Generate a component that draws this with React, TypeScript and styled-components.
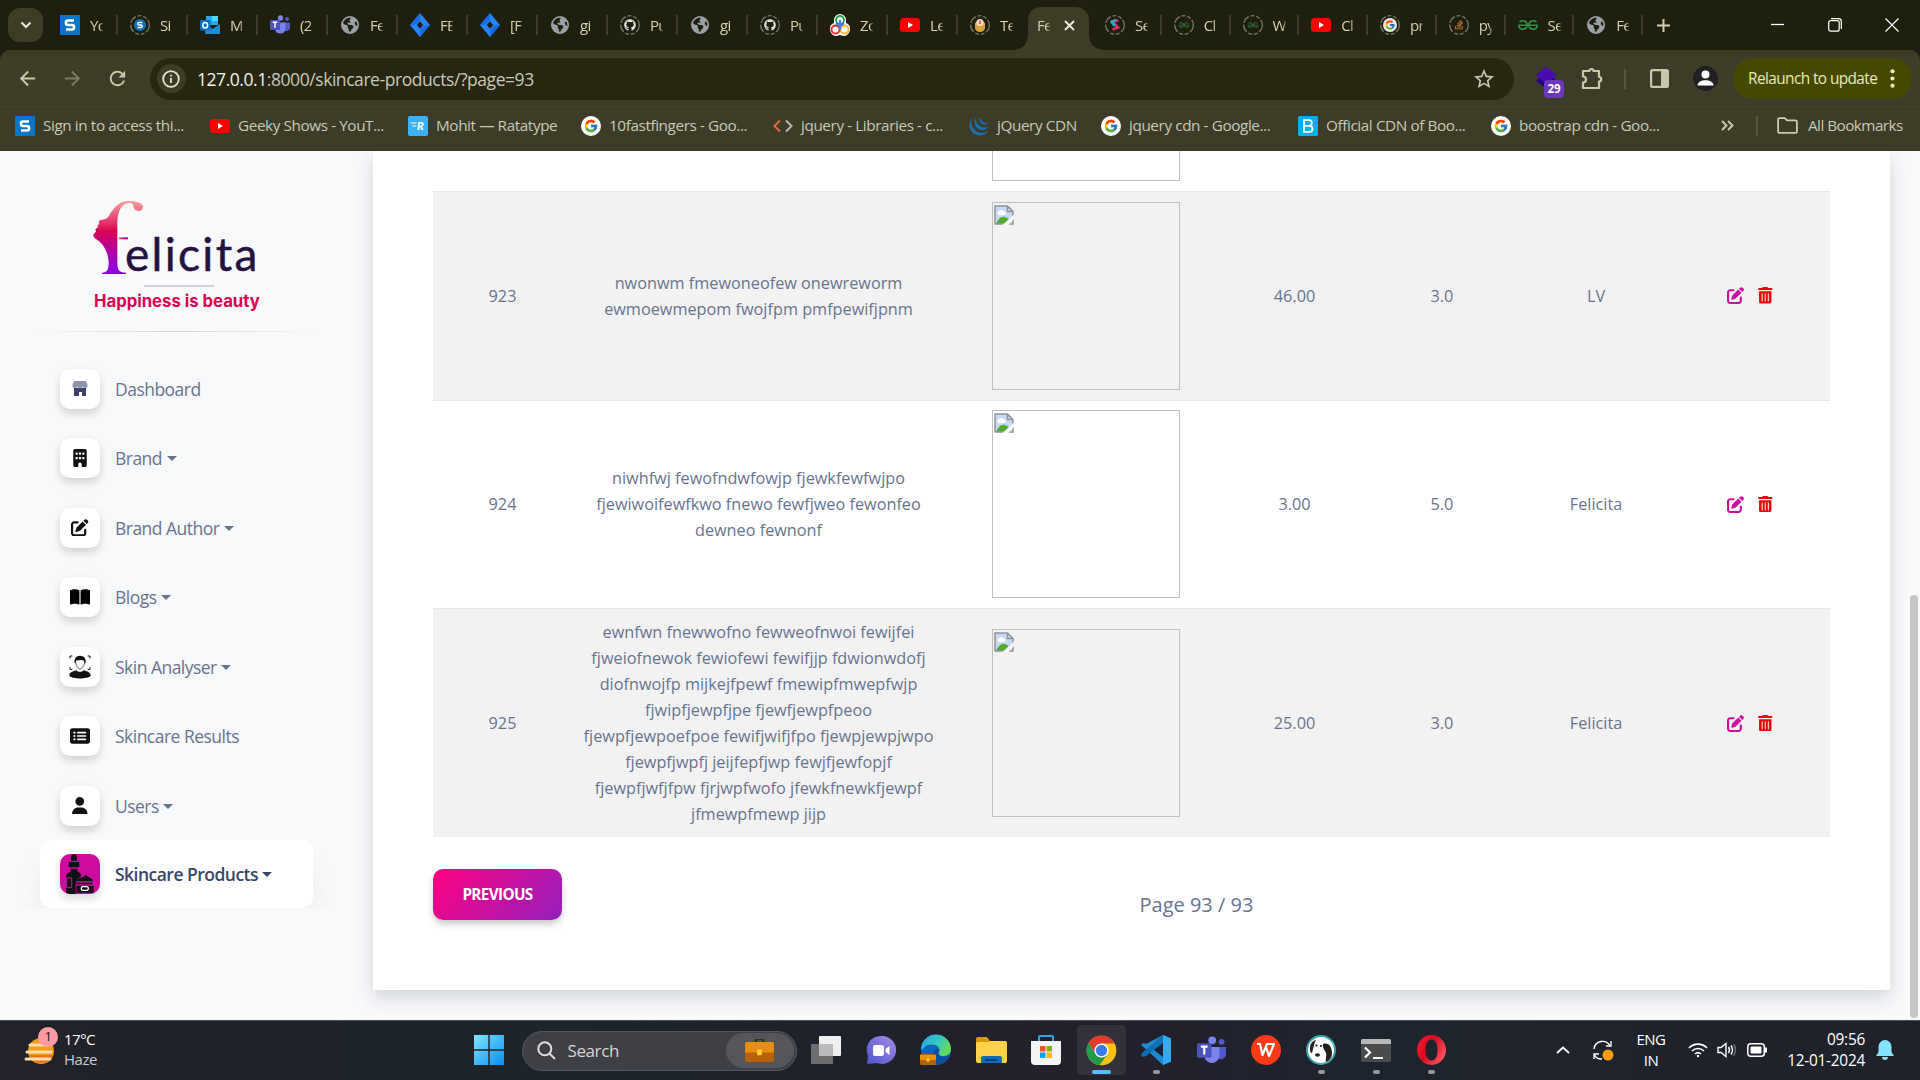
import React from "react";
import styled, { createGlobalStyle, css } from "styled-components";
import {
  FaBuilding,
  FaPenToSquare,
  FaRectangleList,
  FaUser,
  FaTrashCan,
  FaBookOpen,
  FaEarthAmericas,
  FaGithub,
  FaStackOverflow,
} from "react-icons/fa6";
import { SiGeeksforgeeks } from "react-icons/si";
import { FcGoogle } from "react-icons/fc";
import { MdArrowBack, MdArrowForward, MdRefresh, MdStarBorder } from "react-icons/md";

const GlobalStyle = createGlobalStyle`
  * { box-sizing: border-box; }
  html, body { margin: 0; padding: 0; overflow: hidden; }
  body { font-family: "Open Sans", "Noto Sans", sans-serif; }
  svg { display: block; flex: none; }
`;

const Screen = styled.div`
  width: 1920px;
  height: 1080px;
  display: flex;
  flex-direction: column;
  overflow: hidden;
  background: #f8f9fb;
`;

/* ---------- Browser chrome ---------- */

const TabStrip = styled.div`
  height: 50px;
  flex: none;
  background: #1f1f0d;
  display: flex;
  padding-left: 8px;
`;

const TabSearch = styled.div`
  width: 35px;
  height: 34px;
  margin: 8px 5px 0 0;
  border-radius: 12px;
  background: #3c3c28;
  display: flex;
  align-items: center;
  justify-content: center;
`;

const Tab = styled.div<{ $w: number; $sep?: boolean }>`
  width: ${(p) => p.$w}px;
  height: 50px;
  flex: none;
  padding-left: 12px;
  display: flex;
  align-items: center;
  gap: 10px;
  ${(p) =>
    p.$sep &&
    css`
      background: linear-gradient(#3c3c28, #3c3c28) no-repeat right 15px / 2px 20px;
      background-position: right 0 top 15px;
    `}
`;

const TabTitle = styled.span`
  width: 13px;
  overflow: hidden;
  white-space: nowrap;
  font-size: 15px;
  line-height: 20px;
  letter-spacing: -0.7px;
  color: #d2d3b0;
  mask-image: linear-gradient(90deg, #000 75%, rgba(0, 0, 0, 0.25));
`;

const ActiveTab = styled.div`
  position: relative;
  width: 61px;
  height: 43px;
  margin: 7px 4px 0 0;
  flex: none;
  border-radius: 13px 13px 0 0;
  background: #3c3c28;
  display: flex;
  align-items: center;
  padding: 0 0 7px 9px;
  gap: 14px;
  &::before,
  &::after {
    content: "";
    position: absolute;
    bottom: 0;
    width: 14px;
    height: 14px;
  }
  &::before {
    left: -14px;
    background: radial-gradient(circle at 0 0, transparent 13.5px, #3c3c28 14px);
  }
  &::after {
    right: -14px;
    background: radial-gradient(circle at 100% 0, transparent 13.5px, #3c3c28 14px);
  }
`;

const NewTab = styled.div`
  width: 40px;
  height: 50px;
  display: flex;
  align-items: center;
  justify-content: center;
`;

const WindowButtons = styled.div`
  margin-left: auto;
  display: flex;
  height: 49px;
`;

const WindowButton = styled.div`
  width: 57px;
  display: flex;
  align-items: center;
  justify-content: center;
`;

const ChromeFrame = styled.div`
  background: #1f1f0d;
  flex: none;
`;

const Toolbar = styled.div`
  height: 57px;
  background: #3c3c28;
  border-radius: 10px 10px 0 0;
  border-bottom: 1px solid #42422f;
  display: flex;
  align-items: center;
  padding: 1px 8px 0 15px;
`;

const NavIcon = styled.div<{ $dim?: boolean }>`
  width: 26px;
  margin-right: 19px;
  display: flex;
  justify-content: center;
  color: ${(p) => (p.$dim ? "#7c7c66" : "#c8c9a8")};
`;

const Omnibox = styled.div`
  width: 1365px;
  height: 42px;
  border-radius: 21px;
  background: #262613;
  display: flex;
  align-items: center;
  padding: 0 18px 0 7px;
`;

const InfoBadge = styled.div`
  width: 29px;
  height: 29px;
  border-radius: 50%;
  background: #3c3c28;
  display: flex;
  align-items: center;
  justify-content: center;
  margin-right: 11px;
`;

const Url = styled.div`
  flex: 1;
  font-size: 17.5px;
  line-height: 24px;
  letter-spacing: -0.44px;
  color: #c8c9b4;
  b {
    font-weight: 400;
    color: #f2f3e0;
  }
`;

const ExtensionSlot = styled.div`
  position: relative;
  width: 30px;
  height: 42px;
  margin-left: 22px;
  display: flex;
  align-items: center;
`;

const ExtensionBadge = styled.span`
  position: absolute;
  left: 8px;
  top: 22px;
  width: 20px;
  height: 18px;
  border-radius: 4px;
  background: #6a37bd;
  color: #fff;
  font-size: 11.5px;
  font-weight: 700;
  line-height: 18px;
  text-align: center;
`;

const Puzzle = styled.div`
  margin-left: 15px;
`;

const Divider = styled.div<{ $l: number; $r: number }>`
  width: 2px;
  height: 20px;
  background: #55563d;
  margin: 0 ${(p) => p.$r}px 0 ${(p) => p.$l}px;
`;

const Profile = styled.div`
  width: 25px;
  height: 25px;
  margin: 0 15px 0 24px;
  border-radius: 50%;
  background: #202124;
  overflow: hidden;
`;

const Relaunch = styled.div`
  width: 179px;
  height: 41px;
  border-radius: 20px;
  background: #454900;
  color: #e7e9b8;
  font-size: 15.4px;
  letter-spacing: -0.6px;
  display: flex;
  align-items: center;
  justify-content: space-between;
  padding: 0 17px 1px 15px;
  white-space: nowrap;
`;

const Bookmarks = styled.div`
  height: 44px;
  background: #3c3c28;
  display: flex;
  align-items: center;
  padding: 0 18px 7px 15px;
`;

const Bookmark = styled.div<{ $w: number }>`
  width: ${(p) => p.$w}px;
  flex: none;
  display: flex;
  align-items: center;
  gap: 8px;
  font-size: 15.3px;
  line-height: 20px;
  letter-spacing: -0.41px;
  color: #c9cab4;
  white-space: nowrap;
`;

const BookmarkLabel = styled.span`
  padding-bottom: 2px;
`;

const AllBookmarks = styled(Bookmark)`
  gap: 10px;
  letter-spacing: -0.55px;
`;

const BookmarkMore = styled.div`
  margin-left: 65px;
`;

/* ---------- Page ---------- */

const Page = styled.div`
  height: 869px;
  flex: none;
  display: flex;
  background: #f8f9fb;
  overflow: hidden;
`;

const Sidebar = styled.aside`
  width: 313px;
  margin: 0 40px 0 20px;
  height: 757px;
  overflow: hidden;
  flex: none;
`;

const Brand = styled.div`
  height: 180px;
  padding: 44px 0 0 68px;
`;

const BrandWord = styled.div`
  display: flex;
  height: 85px;
`;

const BrandText = styled.span`
  font-family: Lato, sans-serif;
  font-size: 46px;
  line-height: 46px;
  letter-spacing: 2.3px;
  color: #24123f;
  margin: 36px 0 0 -23px;
  -webkit-text-stroke: 0.5px #24123f;
`;

const BrandRule = styled.div`
  width: 70px;
  height: 2px;
  background: #d0d1d4;
  margin: 5px 0 0 56px;
`;

const Tagline = styled.div`
  font-family: Inter, sans-serif;
  font-weight: 700;
  font-size: 16.7px;
  line-height: 22px;
  color: #d9014f;
  margin: 3px 0 0 6px;
  white-space: nowrap;
`;

const SideRule = styled.div`
  height: 1px;
  background: linear-gradient(90deg, transparent 4%, rgba(0, 0, 0, 0.15), transparent 96%);
`;

const Menu = styled.nav`
  margin-top: 21.8px;
`;

const MenuItem = styled.div<{ $active?: boolean }>`
  height: ${(p) => (p.$active ? 68 : 69.5)}px;
  width: 273px;
  margin-left: 20px;
  padding-left: 20px;
  display: flex;
  align-items: center;
  gap: 15px;
  font-size: 17.5px;
  letter-spacing: -0.52px;
  color: #67748e;
  white-space: nowrap;
  ${(p) =>
    p.$active &&
    css`
      background: #fff;
      border-radius: 10px;
      box-shadow: 0 20px 27px rgba(0, 0, 0, 0.05);
      color: #344767;
      font-weight: 600;
    `}
`;

const IconTile = styled.div<{ $active?: boolean }>`
  width: 40px;
  height: 40px;
  border-radius: 10px;
  background: ${(p) => (p.$active ? "#cb0c9f" : "#fff")};
  box-shadow: 0 5px 8px rgba(20, 20, 20, 0.12), 0 3px 12px rgba(20, 20, 20, 0.05);
  display: flex;
  align-items: center;
  justify-content: center;
  color: #111;
  overflow: hidden;
`;

const Caret = styled.i`
  display: inline-block;
  margin-left: 4.5px;
  vertical-align: 4px;
  border: 5px solid transparent;
  border-top-color: currentColor;
  border-bottom: 0;
`;

const Card = styled.main`
  width: 1517px;
  height: 839px;
  flex: none;
  background: #fff;
  box-shadow: 0 8px 18px rgba(20, 30, 40, 0.16);
  padding: 0 60px;
`;

const ScrollRail = styled.div`
  margin-left: auto;
  width: 10px;
  padding-top: 444px;
`;

const ScrollThumb = styled.div`
  width: 8px;
  height: 423px;
  border-radius: 4px;
  background: #c4c5c6;
`;

const Row = styled.div<{ $h: number; $odd?: boolean }>`
  display: grid;
  grid-template-columns: 139px 373px 282px 135px 160px 148px 160px;
  height: ${(p) => p.$h}px;
  align-items: center;
  text-align: center;
  border-top: 1px solid #e7e8e9;
  background: ${(p) => (p.$odd ? "#f2f2f2" : "#fff")};
  font-size: 16.25px;
  line-height: 26px;
  color: #67748e;
`;

const NameCell = styled.div`
  white-space: pre-line;
`;

const Picture = styled.div`
  width: 188px;
  height: 188px;
  margin: 0 auto;
  border: 1px solid #c0c0c0;
  padding: 2px 0 0 1px;
`;

const HiddenRow = styled.div`
  height: 40px;
  display: flex;
  justify-content: flex-start;
  padding-left: 559px;
`;

const PictureTail = styled.div`
  width: 188px;
  height: 30px;
  border: 1px solid #c0c0c0;
  border-top: 0;
`;

const Actions = styled.div`
  display: flex;
  justify-content: center;
  gap: 13.5px;
  .edit {
    color: #cb0c9f;
  }
  .trash {
    color: #ee0404;
  }
`;

const Pager = styled.div`
  display: flex;
  margin-top: 32px;
`;

const Previous = styled.button`
  width: 129px;
  height: 51px;
  border: 0;
  border-radius: 10px;
  padding: 0 0 2px;
  background: linear-gradient(310deg, #9420bb, #ff0080);
  box-shadow: 0 5px 9px -1px rgba(0, 0, 0, 0.16), 0 3px 6px -1px rgba(0, 0, 0, 0.1);
  color: #fff;
  font-family: inherit;
  font-weight: 700;
  font-size: 15.3px;
  letter-spacing: -0.65px;
`;

const PageCount = styled.div`
  margin: 20px 0 0 577.5px;
  font-size: 20px;
  line-height: 32px;
  color: #67748e;
`;

/* ---------- Taskbar ---------- */

const Taskbar = styled.footer`
  height: 60px;
  flex: none;
  border-top: 1px solid #4a5057;
  background: linear-gradient(90deg, #22222a 0%, #1c242c 28%, #20212a 48%, #23202c 58%, #1e242d 70%, #20222b 100%);
  color: #fff;
  display: flex;
  align-items: center;
  font-size: 15px;
`;

const Weather = styled.div`
  width: 461.5px;
  display: flex;
  align-items: center;
  padding: 0 0 3px 24px;
  gap: 6px;
  line-height: 20px;
  letter-spacing: -0.5px;
`;

const Condition = styled.span`
  color: #c9cbce;
`;

const WeatherIcon = styled.div`
  position: relative;
  width: 34px;
  height: 42px;
  padding-top: 9px;
`;

const WeatherBadge = styled.span`
  position: absolute;
  right: 0;
  top: -1px;
  width: 20px;
  height: 20px;
  border-radius: 50%;
  background: #ff99a4;
  color: #2a1215;
  text-align: center;
  font-size: 13px;
  line-height: 19px;
`;

const Slot = styled.div<{ $on?: boolean; $dot?: boolean }>`
  width: 55px;
  height: 59px;
  display: flex;
  flex-direction: column;
  align-items: center;
  padding-top: 4px;
  &::after {
    content: "";
    width: ${(p) => (p.$on ? 19 : 7)}px;
    height: 4px;
    margin-top: -5px;
    border-radius: 2px;
    background: ${(p) => (p.$on ? "#4cc2ff" : p.$dot ? "#95979b" : "transparent")};
  }
`;

const SlotFace = styled.div<{ $on?: boolean }>`
  width: 49px;
  height: 50px;
  border-radius: 5px;
  background: ${(p) => (p.$on ? "rgba(255,255,255,.08)" : "none")};
  display: flex;
  align-items: center;
  justify-content: center;
`;

const SearchPill = styled.div`
  width: 275px;
  height: 40px;
  margin: 0 2px 0 5px;
  border-radius: 20px;
  border: 1px solid #54565c;
  background: #3f4045;
  display: flex;
  align-items: center;
  padding: 0 2px 0 14px;
  gap: 12px;
  font-size: 17px;
  letter-spacing: -0.4px;
  color: #d4d5d7;
`;

const SearchArt = styled.div`
  margin-left: auto;
  width: 68px;
  height: 35px;
  border-radius: 18px;
  background: #55565b;
  display: flex;
  align-items: center;
  justify-content: center;
`;

const Tray = styled.div`
  margin-left: auto;
  display: flex;
  align-items: center;
  padding: 0 26px 1px 0;
`;

const TrayItem = styled.div<{ $l: number }>`
  margin-left: ${(p) => p.$l}px;
`;

const TrayText = styled.div<{ $w: number; $l: number; $end?: boolean }>`
  width: ${(p) => p.$w}px;
  margin-left: ${(p) => p.$l}px;
  text-align: ${(p) => (p.$end ? "right" : "center")};
  font-size: ${(p) => (p.$end ? 15.4 : 15)}px;
  line-height: 21px;
  letter-spacing: ${(p) => (p.$end ? -0.25 : -0.5)}px;
  white-space: nowrap;
`;

/* ---------- Small drawings ---------- */

const Ring = ({ children }: { children: React.ReactNode }) => (
  <svg width="20" height="24" viewBox="0 0 20 24">
    <circle cx="10" cy="12" r="9.3" fill="none" stroke="#77786a" strokeWidth="1.3" strokeDasharray="8 1.8 4 1.8 4 1.8 8 1.8" />
    {children}
  </svg>
);
const SBox = () => (
  <svg width="20" height="20" viewBox="0 0 20 20">
    <rect width="20" height="20" fill="#0277c9" />
    <path d="M14 5.5H8a2 2 0 0 0-2 2v.5a2 2 0 0 0 2 2h4a2 2 0 0 1 2 2v.5a2 2 0 0 1-2 2H6" fill="none" stroke="#fff" strokeWidth="2.6" />
  </svg>
);
const YouTube = () => (
  <svg width="20" height="20" viewBox="0 0 20 20">
    <rect y="3" width="20" height="14" rx="3.5" fill="#f00" />
    <path d="M8 7v6l5-3z" fill="#fff" />
  </svg>
);
const Outlook = () => (
  <svg width="20" height="20" viewBox="0 0 20 20">
    <path d="M6 1h12v9H6z" fill="#28a8ea" />
    <path d="M12 1h6v5h-6z" fill="#50d9ff" />
    <path d="M5 9l7.5 5L20 9v9a1 1 0 0 1-1 1H6a1 1 0 0 1-1-1z" fill="#1490df" />
    <rect y="5" width="10.5" height="10.5" rx="1" fill="#0f6cbd" />
    <ellipse cx="5.2" cy="10.2" rx="2.4" ry="2.8" fill="none" stroke="#fff" strokeWidth="1.5" />
  </svg>
);
const Teams = ({ s = 20 }: { s?: number }) => (
  <svg width={s} height={s} viewBox="0 0 20 20">
    <circle cx="10.5" cy="3" r="2.7" fill="#7b83eb" />
    <circle cx="17" cy="4" r="2" fill="#5059c9" />
    <path d="M13 7.5h7V13a3.5 3.5 0 0 1-6 2z" fill="#5059c9" />
    <path d="M5 7.5h10.5V14A5.3 5.3 0 0 1 5 14z" fill="#7b83eb" />
    <rect y="5" width="10" height="10" rx="1" fill="#4b53bc" />
    <path d="M2.7 7.3h4.6M5 7.3v5.5" stroke="#fff" strokeWidth="1.5" />
  </svg>
);
const Jira = () => (
  <svg width="20" height="24" viewBox="0 0 20 24">
    <path d="M10 0l10 12-10 12L0 12z" fill="#2684ff" />
    <path d="M10 0v7l-5 5-5 0zM10 24v-7l5-5h5z" fill="#1260dc" opacity=".65" />
    <path d="M10 8.2l3.2 3.8-3.2 3.8L6.8 12z" fill="#20210f" />
  </svg>
);
const GlobeBox = styled.span`
  padding: 0 1px;
`;
const Globe = () => (
  <GlobeBox>
    <FaEarthAmericas size={18} color="#9aa0a6" />
  </GlobeBox>
);
const GitHubTab = () => (
  <Ring>
    <FaGithub x="4" y="6" size={12} color="#dfdfe0" />
  </Ring>
);
const Zoho = () => (
  <svg width="20" height="24" viewBox="0 0 20 22">
    <path d="M10 0a6 6 0 0 1 6 6v3a6 6 0 0 1 4 6c0 4-3 7-6 7-2 0-3-1-4-1s-2 1-4 1c-3 0-6-3-6-7a6 6 0 0 1 4-6V6a6 6 0 0 1 6-6z" fill="#fff" />
    <circle cx="10" cy="6" r="4" fill="none" stroke="#1a9f4b" strokeWidth="1.8" />
    <circle cx="5.5" cy="15.5" r="4" fill="none" stroke="#e42527" strokeWidth="1.8" />
    <circle cx="14.5" cy="15.5" r="4" fill="none" stroke="#f9b21d" strokeWidth="1.8" />
    <path d="M10 6v10M6 9l4 3 4-3" stroke="#3f7ed8" strokeWidth="2.2" fill="none" />
  </svg>
);
const GBadge = () => (
  <svg width="20" height="20" viewBox="0 0 20 20">
    <circle cx="10" cy="10" r="10" fill="#fff" />
    <FcGoogle x="2.5" y="2.5" size={15} />
  </svg>
);

const tabsLeft: [React.ReactNode, string][] = [
  [<SBox />, "Yo"],
  [<Ring><circle cx="10" cy="12" r="6" fill="#1374b8" /><path d="M12.3 9.5H9a1.2 1.2 0 0 0 0 2.5h2a1.2 1.2 0 0 1 0 2.5H7.7" fill="none" stroke="#fff" strokeWidth="1.3" /></Ring>, "Si"],
  [<Outlook />, "M"],
  [<Teams />, "(2"],
  [<Globe />, "Fe"],
  [<Jira />, "FE"],
  [<Jira />, "[F"],
  [<Globe />, "gi"],
  [<GitHubTab />, "Pu"],
  [<Globe />, "gi"],
  [<GitHubTab />, "Pu"],
  [<Zoho />, "Zo"],
  [<YouTube />, "Le"],
  [<Ring><path d="M5 10l5-4 5 4v5a5 4 0 0 1-10 0z" fill="#d8a53c" /><circle cx="10" cy="9.5" r="3.6" fill="#f3d9c8" /><path d="M10 7.5v3.4" stroke="#d33" strokeWidth="1.4" /></Ring>, "Te"],
];
const tabsRight: [React.ReactNode, string][] = [
  [<Ring><path d="M13.5 7.5l-6 1 5.5 6-5.5 2" fill="none" stroke="#d8326f" strokeWidth="2.6" /><path d="M11 6.5L6.6 9l3 4" fill="none" stroke="#18b5cf" strokeWidth="2.4" /></Ring>, "Se"],
  [<Ring><SiGeeksforgeeks x="4.5" y="6.5" size={11} color="#2c6e3b" /></Ring>, "Cl"],
  [<Ring><SiGeeksforgeeks x="4.5" y="6.5" size={11} color="#2c6e3b" /></Ring>, "W"],
  [<YouTube />, "Cl"],
  [<Ring><circle cx="10" cy="12" r="7" fill="#e9e9e9" /><FcGoogle x="4.5" y="6.5" size={11} /></Ring>, "pr"],
  [<Ring><FaStackOverflow x="4.5" y="6" size={11} color="#d9772b" /></Ring>, "py"],
  [<SiGeeksforgeeks size={20} color="#2f8d46" />, "Se"],
  [<Globe />, "Fe"],
];

const bookmarks: [React.ReactNode, string, number][] = [
  [<SBox />, "Sign in to access thi...", 195],
  [<YouTube />, "Geeky Shows - YouT...", 198],
  [
    <svg width="20" height="20" viewBox="0 0 20 20">
      <rect width="20" height="20" rx="2" fill="#3bb0fb" />
      <path d="M2.5 7h6M4.5 10h4" stroke="#fff" strokeWidth="1.2" />
      <text x="9" y="14" fontFamily="Lato" fontStyle="italic" fontWeight="900" fontSize="11" fill="#fff">R</text>
    </svg>,
    "Mohit — Ratatype",
    173,
  ],
  [<GBadge />, "10fastfingers - Goo...", 192],
  [
    <svg width="20" height="20" viewBox="0 0 20 20">
      <path d="M7 4.5L1.5 10 7 15.5" fill="none" stroke="#e8643a" strokeWidth="2" />
      <path d="M13 4.5l5.5 5.5-5.5 5.5" fill="none" stroke="#b9b9b0" strokeWidth="2" />
    </svg>,
    "jquery - Libraries - c...",
    196,
  ],
  [
    <svg width="20" height="20" viewBox="0 0 20 20" fill="#1c6fb0">
      <path d="M2.5 2.5C-2 9 1 19.5 11 19.5c4 0 7-2 8.5-5-3 2.5-7 3-10.5 1.5C3.5 13.5 1.5 8 2.5 2.5z" />
      <path d="M6.5 1.5C4 7 7 14 13 14c3 0 5-1.5 6.5-3.5-3 1.5-5.5 1.5-8 0C8 8.5 6.3 5 6.5 1.5z" />
      <path d="M11 .5C9.5 4.5 11.5 8.5 15.5 8.5c1.8 0 3-.8 4-2-1.8.7-3.5.7-5-.2C12.3 5 11.2 2.8 11 .5z" />
    </svg>,
    "jQuery CDN",
    132,
  ],
  [<GBadge />, "jquery cdn - Google...", 197],
  [
    <svg width="20" height="20" viewBox="0 0 20 20">
      <rect width="20" height="20" rx="1.5" fill="#06aeef" />
      <path d="M6 4.2h5a2.8 2.8 0 0 1 0 5.6H6zm0 5.6h5.5a3 3 0 0 1 0 6H6z" fill="none" stroke="#fff" strokeWidth="1.8" />
    </svg>,
    "Official CDN of Boo...",
    193,
  ],
  [<GBadge />, "boostrap cdn - Goo...", 165],
];

const Dashboard = () => (
  <svg width="16" height="16" viewBox="0 0 16 16">
    <path d="M2 7h12v8h-4v-4H7v4H2z" fill="#3a416f" />
    <path d="M2 0h12l1.5 4a2.5 2.5 0 0 1-5 1 2.5 2.5 0 0 1-5 0 2.5 2.5 0 0 1-5-1z" fill="#9193b3" />
  </svg>
);
const FaceScan = () => (
  <svg width="22" height="24" viewBox="0 0 66 72">
    <path d="M3 10V3h7M56 3h7v7M3 37v6h7M56 43h7v-6" fill="none" stroke="#111" strokeWidth="3" />
    <path d="M20 16C22 3 44 3 47 16c1 14-4 20-14 27C24 37 19 30 20 16z" fill="#fff" stroke="#111" strokeWidth="2" />
    <path d="M18 26C13 10 22 2 33 2s21 8 16 24l-4-9c-8-4-17 0-23-1z" fill="#111" />
    <path d="M1 62C1 50 12 50 22 46c5 6 17 6 22 0 12 4 21 5 21 16-10 11-54 11-64 0z" fill="#111" />
  </svg>
);
const SkincareArt = () => (
  <svg width="40" height="40" viewBox="0 0 120 120">
    <g fill="#111">
      <path d="M33 20V8c0-10 18-10 18 0v12z" />
      <rect x="26" y="24" width="32" height="16" rx="3" />
      <path d="M32 44h20v8c8 5 12 8 12 16v52H18V68c0-8 8-10 14-16z" />
    </g>
    <path d="M47 120V90c2-16 16-24 30-30 12 6 24 14 26 30v30z" fill="#cb0c9f" />
    <path d="M50 82c2-8 12-10 19-12l9-8 8 8c8 3 14 6 12 12zM50 86h48v5H50zM49 95h52v21H49z" fill="#111" />
    <rect x="20" y="72" width="15" height="28" fill="none" stroke="#cb0c9f" strokeWidth="3" />
    <rect x="64" y="98" width="21" height="11" rx="5" fill="none" stroke="#fff" strokeWidth="4" />
  </svg>
);

const menu: [React.ReactNode, string, boolean][] = [
  [<Dashboard />, "Dashboard", false],
  [<FaBuilding size={18} />, "Brand", true],
  [<FaPenToSquare size={17.5} />, "Brand Author", true],
  [<FaBookOpen size={20} color="#000" />, "Blogs", true],
  [<FaceScan />, "Skin Analyser", true],
  [<FaRectangleList size={20} />, "Skincare Results", false],
  [<FaUser size={17.5} />, "Users", true],
];

const BrokenImage = () => (
  <svg width="20" height="20" viewBox="0 0 20 20">
    <path d="M1 1h12.5L19 6.5V19H1z" fill="#c6d9f7" />
    <path d="M4 10a2.5 2.5 0 0 1 1-4 2.5 2.5 0 0 1 4 0 2 2 0 0 1 1 4z" fill="#fff" />
    <path d="M2 19c2-5 5-8 9-7l4 2-4 5z" fill="#54ab36" />
    <path d="M1 19.5V1h12.5L19 6.5V19H1M13.5 1v5.5H19" fill="none" stroke="#8f9499" strokeWidth="1.5" />
    <path d="M8.5 20L20 9.5V14l-5.5 6z" fill="#f8f8f8" />
  </svg>
);

type Product = { id: string; name: string; price: string; rating: string; brand: string; h: number };
const products: Product[] = [
  { id: "923", name: "nwonwm fmewoneofew onewreworm\newmoewmepom fwojfpm pmfpewifjpnm", price: "46.00", rating: "3.0", brand: "LV", h: 208.5 },
  { id: "924", name: "niwhfwj fewofndwfowjp fjewkfewfwjpo\nfjewiwoifewfkwo fnewo fewfjweo fewonfeo\ndewneo fewnonf", price: "3.00", rating: "5.0", brand: "Felicita", h: 208.5 },
  {
    id: "925",
    name: "ewnfwn fnewwofno fewweofnwoi fewijfei\nfjweiofnewok fewiofewi fewifjjp fdwionwdofj\ndiofnwojfp mijkejfpewf fmewipfmwepfwjp\nfjwipfjewpfjpe fjewfjewpfpeoo\nfjewpfjewpoefpoe fewifjwifjfpo fjewpjewpjwpo\nfjewpfjwpfj jeijfepfjwp fewjfjewfopjf\nfjewpfjwfjfpw fjrjwpfwofo jfewkfnewkfjewpf\njfmewpfmewp jijp",
    price: "25.00",
    rating: "3.0",
    brand: "Felicita",
    h: 229,
  },
];

const Briefcase = ({ w, h }: { w: number; h: number }) => (
  <svg width={w} height={h} viewBox="0 0 30 24">
    <path d="M11 4V2q0-2 2-2h4q2 0 2 2v2" fill="none" stroke="#3c2c20" strokeWidth="2.5" />
    <rect y="3" width="30" height="21" rx="2" fill="#b8620e" />
    <path d="M0 5q0-2 2-2h26q2 0 2 2v9H0z" fill="#e98d0d" />
    <rect x="12.5" y="11" width="5" height="6" rx="1" fill="#ffd02e" />
  </svg>
);

const apps: { icon: React.ReactNode; on?: boolean; dot?: boolean }[] = [
  {
    icon: (
      <svg width="30" height="28" viewBox="0 0 30 28">
        <rect x="8" width="22" height="20" rx="1" fill="#efeff0" />
        <rect y="8" width="22" height="20" rx="1" fill="#6d6e70" />
        <rect x="8" y="8" width="14" height="12" fill="#b9babb" />
      </svg>
    ),
  },
  {
    icon: (
      <svg width="30" height="29" viewBox="0 0 30 29">
        <defs>
          <linearGradient id="chat" x1="1" y1="0" x2="0" y2="1">
            <stop stopColor="#a78be6" />
            <stop offset="1" stopColor="#4b55cf" />
          </linearGradient>
        </defs>
        <path d="M15 0a14 14 0 1 1-4 27l-10 1 1-8A14 14 0 0 1 15 0z" fill="url(#chat)" />
        <rect x="7" y="9" width="11" height="11" rx="2" fill="#fff" />
        <path d="M19.5 13l4-3v9l-4-3z" fill="#fff" />
      </svg>
    ),
  },
  {
    icon: (
      <svg width="32" height="32" viewBox="0 0 32 32">
        <defs>
          <linearGradient id="edge" x1="0" y1="0" x2="1" y2=".4">
            <stop stopColor="#2aa5e8" />
            <stop offset=".6" stopColor="#35c7c3" />
            <stop offset="1" stopColor="#61dd5b" />
          </linearGradient>
        </defs>
        <circle cx="16" cy="16" r="15" fill="#1263b3" />
        <path d="M1 16A15 15 0 0 1 31 15c0 5-4 7-8 7-3 0-5-2-4-4 3-7-9-10-14-5z" fill="url(#edge)" />
        <path d="M19 17c-2 3 0 6 5 6 2 0 4-1 6-2-3 6-8 10-14 9-4-3-5-10-1-14 2-2 5-1 4 1z" fill="#0c4f9c" />
        <g transform="translate(0 20)">
          <rect width="16" height="11" rx="1.5" fill="#b8620e" />
          <path d="M0 1h16v5H0z" fill="#ea930f" />
          <rect x="6.5" y="4.5" width="3" height="3" fill="#ffd02e" />
        </g>
      </svg>
    ),
  },
  {
    icon: (
      <svg width="31" height="27" viewBox="0 0 31 27">
        <path d="M0 2q0-2 2-2h9l3 4h15q2 0 2 2v6H0z" fill="#d79a06" />
        <path d="M0 7q0-2 2-2h10l3-1h14q2 0 2 2v18q0 2-2 2H2q-2 0-2-2z" fill="#ffd04a" />
        <path d="M5 26v-5q0-2 2-2h17q2 0 2 2v5z" fill="#0f6cbf" />
        <path d="M9 23h12" stroke="#063f77" strokeWidth="2" />
      </svg>
    ),
  },
  {
    icon: (
      <svg width="30" height="30" viewBox="0 0 30 30">
        <path d="M8 7V2q0-1 1-1h12q1 0 1 1v5" fill="none" stroke="#28a9ea" strokeWidth="2" />
        <path d="M0 6h30v20q0 4-4 4H4q-4 0-4-4z" fill="#f4f4f5" />
        <path d="M9 11h5.5v5.5H9z" fill="#f25022" />
        <path d="M15.5 11H21v5.5h-5.5z" fill="#7fba00" />
        <path d="M9 17.5h5.5V23H9z" fill="#00a4ef" />
        <path d="M15.5 17.5H21V23h-5.5z" fill="#ffb900" />
      </svg>
    ),
  },
  {
    on: true,
    icon: (
      <svg width="31" height="31" viewBox="0 0 48 48">
        <circle cx="24" cy="24" r="23" fill="#fbc116" />
        <path d="M24 13h20A23 23 0 0 0 4 12l10 18z" fill="#e33b2e" />
        <path d="M4 12a23 23 0 0 0 17 34.8L33.5 29.5 24 35l-9.5-5.5z" fill="#229a4b" />
        <circle cx="24" cy="24" r="11" fill="#fff" />
        <circle cx="24" cy="24" r="8.8" fill="#3a7cec" />
      </svg>
    ),
  },
  {
    dot: true,
    icon: (
      <svg width="30" height="30" viewBox="0 0 30 30">
        <path d="M22 0l8 3.5v23L22 30 3 12.5 0 10l2-2 3 1z" fill="#1f8ad2" />
        <path d="M22 0v8L5 21l-3 1-2-2 2-3z" fill="#0f6fb5" />
        <path d="M22 8v14l-9-7z" fill="#1c222b" />
        <path d="M22 0l8 3.5v23L22 30z" fill="#35a9f2" />
      </svg>
    ),
  },
  { icon: <Teams s={29} /> },
  {
    icon: (
      <svg width="30" height="30" viewBox="0 0 30 30">
        <circle cx="15" cy="15" r="15" fill="#fb3a18" />
        <path d="M6 9h3l2.5 11L16 9h7l-5 12-3-9" fill="none" stroke="#fff" strokeWidth="2.2" strokeLinejoin="round" />
      </svg>
    ),
  },
  {
    dot: true,
    icon: (
      <svg width="30" height="30" viewBox="0 0 30 30">
        <circle cx="15" cy="15" r="14" fill="#fff" stroke="#3aa3ad" strokeWidth="2" />
        <path d="M17 9c6-2 9 4 9 9 0 5-3 8-6 9-1-3 1-6 0-9s-4-5-3-9z" fill="#25201e" />
        <path d="M4 13c0-4 2-7 6-8-2 3-2 6-3 9l-1 4c-2 0-2-3-2-5z" fill="#25201e" />
        <ellipse cx="11.5" cy="20" rx="2.5" ry="1.8" fill="#25201e" />
        <circle cx="10.5" cy="10.5" r="1.1" fill="#25201e" />
        <circle cx="15" cy="11" r="1.1" fill="#25201e" />
      </svg>
    ),
  },
  {
    dot: true,
    icon: (
      <svg width="30" height="23" viewBox="0 0 30 23">
        <rect width="30" height="23" rx="1.5" fill="#4a4b4d" />
        <path d="M0 1.5Q0 0 1.5 0h27Q30 0 30 1.5V5H0z" fill="#b6b7b9" />
        <path d="M4 8.5l5 5-5 5M12 19h10" fill="none" stroke="#fff" strokeWidth="2.2" />
      </svg>
    ),
  },
  {
    dot: true,
    icon: (
      <svg width="29" height="30" viewBox="0 0 29 30">
        <defs>
          <linearGradient id="opera" x1="0" y1="0" x2="1" y2=".6">
            <stop stopColor="#ff1b2d" />
            <stop offset=".5" stopColor="#d20d1e" />
            <stop offset="1" stopColor="#ff4f5a" />
          </linearGradient>
        </defs>
        <path fillRule="evenodd" d="M14.5 0a14.5 15 0 1 0 0 30 14.5 15 0 1 0 0-30zm0 4.5c4 0 6 4.5 6 10.5s-2 10.5-6 10.5-6-4.5-6-10.5 2-10.5 6-10.5z" fill="url(#opera)" />
      </svg>
    ),
  },
];

export default function App() {
  return (
    <Screen>
      <GlobalStyle />
      <TabStrip>
        <TabSearch>
          <svg width="12" height="8" viewBox="0 0 12 8"><path d="M1.5 1.5L6 6l4.5-4.5" fill="none" stroke="#e7e8d0" strokeWidth="2" /></svg>
        </TabSearch>
        {tabsLeft.map(([icon, title], i) => (
          <Tab key={i} $w={70} $sep={i < 13}>{icon}<TabTitle>{title}</TabTitle></Tab>
        ))}
        <ActiveTab>
          <TabTitle>Fe</TabTitle>
          <svg width="11" height="11" viewBox="0 0 11 11"><path d="M1 1l9 9M10 1l-9 9" stroke="#eceddb" strokeWidth="1.9" /></svg>
        </ActiveTab>
        {tabsRight.map(([icon, title], i) => (
          <Tab key={i} $w={68.75} $sep>{icon}<TabTitle>{title}</TabTitle></Tab>
        ))}
        <NewTab>
          <svg width="13" height="13" viewBox="0 0 13 13"><path d="M6.5 0v13M0 6.5h13" stroke="#cfd0ae" strokeWidth="2" /></svg>
        </NewTab>
        <WindowButtons>
          <WindowButton><svg width="13" height="13" viewBox="0 0 13 13"><path d="M0 6.5h13" stroke="#fff" strokeWidth="1.3" /></svg></WindowButton>
          <WindowButton><svg width="14" height="14" viewBox="0 0 14 14" fill="none" stroke="#fff" strokeWidth="1.2"><rect x=".7" y="2.7" width="10.5" height="10.5" rx="2" /><path d="M3 .7h7.5a2.8 2.8 0 0 1 2.8 2.8V11" /></svg></WindowButton>
          <WindowButton><svg width="14" height="14" viewBox="0 0 14 14"><path d="M.5.5l13 13M13.5.5l-13 13" stroke="#fff" strokeWidth="1.2" /></svg></WindowButton>
        </WindowButtons>
      </TabStrip>
      <ChromeFrame>
        <Toolbar>
          <NavIcon><MdArrowBack size={23} /></NavIcon>
          <NavIcon $dim><MdArrowForward size={23} /></NavIcon>
          <NavIcon><MdRefresh size={23} /></NavIcon>
          <Omnibox>
            <InfoBadge>
              <svg width="18" height="18" viewBox="0 0 18 18"><circle cx="9" cy="9" r="7.8" fill="none" stroke="#e4e5cd" strokeWidth="1.8" /><path d="M9 8v5M9 4.8v1.8" stroke="#e4e5cd" strokeWidth="1.8" /></svg>
            </InfoBadge>
            <Url><b>127.0.0.1</b>:8000/skincare-products/?page=93</Url>
            <MdStarBorder size={24} color="#c8c9b0" />
          </Omnibox>
          <ExtensionSlot>
            <svg width="22" height="24" viewBox="0 0 22 24"><path d="M10 5l10 8-10 8L0 14z" fill="#24057a" /><path d="M10 0l11 8-11 9L0 8z" fill="#4a0bb0" /></svg>
            <ExtensionBadge>29</ExtensionBadge>
          </ExtensionSlot>
          <Puzzle>
            <svg width="22" height="23" viewBox="0 0 22 23"><path d="M2 4h6.5a2 2 0 0 1 4 0H18v6a2 2 0 0 1 0 4.5V21H2v-5.5c4 0 4-6 0-6z" fill="none" stroke="#c8c9a8" strokeWidth="2.2" strokeLinejoin="round" /></svg>
          </Puzzle>
          <Divider $l={21} $r={24} />
          <svg width="19" height="19" viewBox="0 0 19 19"><rect x="1.1" y="1.1" width="16.8" height="16.8" rx="1.5" fill="none" stroke="#c8c9a8" strokeWidth="2.2" /><path d="M11 1h7v17h-7z" fill="#c8c9a8" /></svg>
          <Profile>
            <svg width="25" height="25" viewBox="0 0 25 25"><circle cx="12.5" cy="8.5" r="4" fill="#fff" /><path d="M4.5 19.5c0-7 16-7 16 0z" fill="#fff" /></svg>
          </Profile>
          <Relaunch>
            Relaunch to update
            <svg width="5" height="19" viewBox="0 0 5 19" fill="#e7e9b8"><circle cx="2.5" cy="2.3" r="2.1" /><circle cx="2.5" cy="9.5" r="2.1" /><circle cx="2.5" cy="16.7" r="2.1" /></svg>
          </Relaunch>
        </Toolbar>
        <Bookmarks>
          {bookmarks.map(([icon, label, w]) => (
            <Bookmark key={label} $w={w}>{icon}<BookmarkLabel>{label}</BookmarkLabel></Bookmark>
          ))}
          <BookmarkMore>
            <svg width="13" height="11" viewBox="0 0 13 11"><path d="M1 1l4.5 4.5L1 10M7 1l4.5 4.5L7 10" fill="none" stroke="#c9cab4" strokeWidth="1.9" /></svg>
          </BookmarkMore>
          <Divider $l={22} $r={19} />
          <AllBookmarks $w={125}>
            <svg width="21" height="17" viewBox="0 0 21 17"><path d="M1.1 2.5q0-1.4 1.4-1.4h5.3l2.2 2.3h8.5q1.4 0 1.4 1.4v9.7q0 1.4-1.4 1.4h-16q-1.4 0-1.4-1.4z" fill="none" stroke="#c9cab4" strokeWidth="1.8" /></svg>
            <BookmarkLabel>All Bookmarks</BookmarkLabel>
          </AllBookmarks>
        </Bookmarks>
      </ChromeFrame>

      <Page>
        <Sidebar>
          <Brand>
            <BrandWord>
              <svg width="60" height="85" viewBox="0 0 180 255">
                <defs>
                  <linearGradient id="face" x1="0" y1="0" x2="0" y2="1">
                    <stop offset="0" stopColor="#f9a0a0" />
                    <stop offset=".42" stopColor="#da0452" />
                    <stop offset=".62" stopColor="#b8008f" />
                    <stop offset=".95" stopColor="#8e00e0" />
                  </linearGradient>
                  <linearGradient id="dash">
                    <stop stopColor="#f0707c" />
                    <stop offset=".5" stopColor="#c2186f" />
                    <stop offset="1" stopColor="#8e00e0" />
                  </linearGradient>
                </defs>
                <path d="M165 34C162 22 140 17 115 18 95 20 80 35 67 55 60 71 55 74 36 75l-4 7 2 4-6 6 2 5-8 6 2 7-9 10 5 10c20 10 40 35 42 70 0 25-4 32-20 33v4h72v-4c-22-1-26-8-26-33V80c2-35 14-54 35-56 13 0 13 8 15 16 5 12 27 12 27-6z" fill="url(#face)" />
                <rect x="93" y="127" width="27" height="6" fill="url(#dash)" />
              </svg>
              <BrandText>elicita</BrandText>
            </BrandWord>
            <BrandRule />
            <Tagline>Happiness is beauty</Tagline>
          </Brand>
          <SideRule />
          <Menu>
            {menu.map(([icon, label, caret]) => (
              <MenuItem key={label}>
                <IconTile>{icon}</IconTile>
                <span>{label}{caret && <Caret />}</span>
              </MenuItem>
            ))}
            <MenuItem $active>
              <IconTile $active><SkincareArt /></IconTile>
              <span>Skincare Products<Caret /></span>
            </MenuItem>
          </Menu>
        </Sidebar>
        <Card>
          <HiddenRow><PictureTail /></HiddenRow>
          {products.map((p, i) => (
            <Row key={p.id} $h={p.h} $odd={i % 2 === 0}>
              <div>{p.id}</div>
              <NameCell>{p.name}</NameCell>
              <Picture><BrokenImage /></Picture>
              <div>{p.price}</div>
              <div>{p.rating}</div>
              <div>{p.brand}</div>
              <Actions>
                <FaPenToSquare className="edit" size={17} />
                <FaTrashCan className="trash" size={16.5} />
              </Actions>
            </Row>
          ))}
          <Pager>
            <Previous>PREVIOUS</Previous>
            <PageCount>Page 93 / 93</PageCount>
          </Pager>
        </Card>
        <ScrollRail><ScrollThumb /></ScrollRail>
      </Page>

      <Taskbar>
        <Weather>
          <WeatherIcon>
            <svg width="32" height="28" viewBox="0 0 32 28">
              <circle cx="17" cy="14" r="13" fill="#f79d12" />
              <path d="M5 18a13 13 0 0 0 24 0z" fill="#ee7411" />
              <path d="M6 8h18M3 15h24M2 22h24" stroke="#f6deb2" strokeWidth="3" strokeLinecap="round" />
            </svg>
            <WeatherBadge>1</WeatherBadge>
          </WeatherIcon>
          <div>17°C<br /><Condition>Haze</Condition></div>
        </Weather>
        <Slot>
          <SlotFace>
            <svg width="30" height="30" viewBox="0 0 30 30">
              <defs><linearGradient id="win" x1="0" y1="0" x2="1" y2="1"><stop stopColor="#7fe6ff" /><stop offset="1" stopColor="#0a8df2" /></linearGradient></defs>
              <path d="M0 0h14.3v14.3H0zM15.7 0H30v14.3H15.7zM0 15.7h14.3V30H0zM15.7 15.7H30V30H15.7z" fill="url(#win)" />
            </svg>
          </SlotFace>
        </Slot>
        <SearchPill>
          <svg width="19" height="19" viewBox="0 0 19 19"><circle cx="7.8" cy="7.8" r="6.5" fill="none" stroke="#dcdddf" strokeWidth="2" /><path d="M12.5 12.5l5.5 5.5" stroke="#dcdddf" strokeWidth="2" /></svg>
          Search
          <SearchArt><Briefcase w={29} h={23} /></SearchArt>
        </SearchPill>
        {apps.map((a, i) => (
          <Slot key={i} $on={a.on} $dot={a.dot}>
            <SlotFace $on={a.on}>{a.icon}</SlotFace>
          </Slot>
        ))}
        <Tray>
          <TrayItem $l={0}><svg width="14" height="8" viewBox="0 0 14 8"><path d="M1 7l6-5.5L13 7" fill="none" stroke="#fff" strokeWidth="1.7" /></svg></TrayItem>
          <TrayItem $l={22}>
            <svg width="22" height="22" viewBox="0 0 22 22"><path d="M2 10a8.5 8.5 0 0 1 16-3M19 2v5h-5M2 20v-5h5M2 15a8 8 0 0 0 8 5" fill="none" stroke="#fff" strokeWidth="1.4" /><circle cx="16" cy="16" r="5.5" fill="#ff9b0b" /></svg>
          </TrayItem>
          <TrayText $w={36} $l={19}>ENG<br />IN</TrayText>
          <TrayItem $l={19}>
            <svg width="20" height="16" viewBox="0 0 20 16" fill="none" stroke="#fff" strokeWidth="1.6"><path d="M1 6a12.5 12.5 0 0 1 18 0M4 9a8.5 8.5 0 0 1 12 0M7 12a4.5 4.5 0 0 1 6 0" /><circle cx="10" cy="14" r="1.2" fill="#fff" stroke="none" /></svg>
          </TrayItem>
          <TrayItem $l={9}>
            <svg width="20" height="16" viewBox="0 0 20 16" fill="none" stroke="#fff" strokeWidth="1.4"><path d="M1 5.5h3l5-4v13l-5-4H1z" /><path d="M11.5 5q2 3 0 6" /><path d="M14 3.5q3 4.5 0 9" /><path d="M16.5 2q4 6 0 12" stroke="#6d7077" /></svg>
          </TrayItem>
          <TrayItem $l={10}>
            <svg width="21" height="14" viewBox="0 0 21 14"><rect x=".8" y=".8" width="16.5" height="12.4" rx="3" fill="none" stroke="#fff" strokeWidth="1.5" /><rect x="3.5" y="3.5" width="11" height="7" rx="1" fill="#fff" /><path d="M19 4.5v5" stroke="#fff" strokeWidth="2" /></svg>
          </TrayItem>
          <TrayText $w={84} $l={13} $end>09:56<br />12-01-2024</TrayText>
          <TrayItem $l={11}>
            <svg width="18" height="20" viewBox="0 0 18 20" fill="#86e2ff"><path d="M9 0a6.5 6.5 0 0 1 6.5 6.5V12L18 16H0l2.5-4V6.5A6.5 6.5 0 0 1 9 0zM6 17h6a3 3 0 0 1-6 0z" /></svg>
          </TrayItem>
        </Tray>
      </Taskbar>
    </Screen>
  );
}
